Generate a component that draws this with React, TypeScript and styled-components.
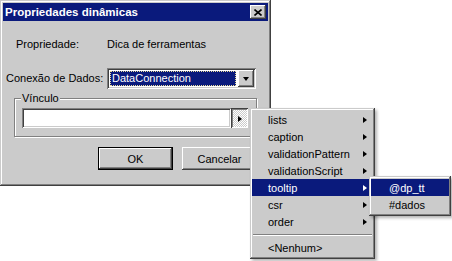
import React from 'react';
import styled, { createGlobalStyle } from 'styled-components';

const FACE = '#cbcbcb';
const NAVY = '#0a1a7c';
const SHADOW = '#808080';
const DARK = '#404040';

const GlobalStyle = createGlobalStyle`
  html, body {
    margin: 0;
    padding: 0;
    background: #fff;
  }
  body {
    font-family: "Liberation Sans", Arial, sans-serif;
    font-size: 11px;
    color: #000;
  }
`;

const raised = `
  box-shadow: inset -1px -1px ${DARK}, inset 1px 1px #fff,
    inset -2px -2px ${SHADOW}, inset 2px 2px ${FACE};
`;

const Stage = styled.div`
  position: relative;
  width: 452px;
  height: 261px;
  overflow: hidden;
`;

const Window = styled.div`
  width: 271px;
  height: 186px;
  box-sizing: border-box;
  padding: 3px;
  background: ${FACE};
  box-shadow: inset -1px -1px ${DARK}, inset 1px 1px ${FACE},
    inset -2px -2px ${SHADOW}, inset 2px 2px #fff;
  display: flex;
  flex-direction: column;
`;

const TitleBar = styled.div`
  height: 18px;
  background: ${NAVY};
  display: flex;
  align-items: center;
  justify-content: space-between;
  padding: 0 2px 0 2px;
`;

const Title = styled.span`
  color: #fff;
  font-weight: bold;
  font-size: 11.5px;
`;

const CloseButton = styled.div`
  width: 16px;
  height: 14px;
  background: ${FACE};
  ${raised}
  display: flex;
  align-items: center;
  justify-content: center;
`;

const Row = styled.div<{ $indent: number; $gap: number }>`
  display: flex;
  align-items: center;
  margin-top: ${p => p.$gap}px;
  padding-left: ${p => p.$indent}px;
  line-height: 13px;
`;

const Label = styled.span<{ $width: number }>`
  width: ${p => p.$width}px;
  flex-shrink: 0;
`;

const Combo = styled.div`
  width: 149px;
  height: 21px;
  box-sizing: border-box;
  padding: 2px;
  background: #fff;
  box-shadow: inset 1px 1px ${SHADOW}, inset -1px -1px #fff,
    inset 2px 2px ${DARK}, inset -2px -2px ${FACE};
  display: flex;
  gap: 1px;
`;

const ComboValue = styled.div`
  flex: 1;
  margin: 1px;
  padding-left: 1px;
  background: ${NAVY};
  color: #fff;
  border: 1px dotted #e8dc9a;
  display: flex;
  align-items: center;
`;

const ComboButton = styled.div`
  width: 16px;
  background: ${FACE};
  ${raised}
  display: flex;
  align-items: center;
  justify-content: center;
`;

const DownArrow = styled.span`
  width: 0;
  height: 0;
  border-left: 3.5px solid transparent;
  border-right: 3.5px solid transparent;
  border-top: 4px solid #000;
`;

const RightArrow = styled.span`
  width: 0;
  height: 0;
  border-top: 3.5px solid transparent;
  border-bottom: 3.5px solid transparent;
  border-left: 4px solid #000;
`;

const Group = styled.div`
  position: relative;
  margin: 9px 0 0 11px;
  width: 243px;
  height: 39px;
  box-sizing: border-box;
  border: 1px solid ${SHADOW};
  box-shadow: inset 1px 1px #fff, 1px 1px #fff;
  padding: 9px 0 0 7px;
`;

const Caption = styled.span`
  position: absolute;
  top: -8px;
  left: 6px;
  padding: 0 1px;
  background: ${FACE};
  line-height: 14px;
`;

const InputRow = styled.div`
  display: flex;
`;

const TextBox = styled.div`
  width: 209px;
  height: 20px;
  background: #fff;
  box-shadow: inset 1px 1px ${SHADOW}, inset -1px -1px #fff,
    inset 2px 2px ${DARK}, inset -2px -2px ${FACE};
`;

const PickButton = styled.div`
  width: 17px;
  height: 20px;
  background: repeating-conic-gradient(#fff 0 25%, ${FACE} 0 50%) 0 0 / 2px 2px;
  box-shadow: inset 1px 1px ${DARK}, inset -1px -1px #fff,
    inset 2px 2px ${SHADOW};
  display: flex;
  align-items: center;
  justify-content: center;
  padding: 1px 0 0 1px;
  box-sizing: border-box;
`;

const ButtonRow = styled.div`
  display: flex;
  gap: 9px;
  margin-top: 10px;
  padding-left: 95px;
`;

const Button = styled.div<{ $default?: boolean }>`
  width: 75px;
  height: 23px;
  box-sizing: border-box;
  background: ${FACE};
  display: flex;
  align-items: center;
  justify-content: center;
  box-shadow: ${p =>
    p.$default
      ? `inset 0 0 0 1px #000, inset -2px -2px ${DARK}, inset 2px 2px #fff, inset -3px -3px ${SHADOW}`
      : `inset -1px -1px ${DARK}, inset 1px 1px #fff, inset -2px -2px ${SHADOW}`};
`;

const Menu = styled.div<{ $left: number; $top: number; $width: number }>`
  position: absolute;
  left: ${p => p.$left}px;
  top: ${p => p.$top}px;
  width: ${p => p.$width}px;
  box-sizing: border-box;
  padding: 3px 2px;
  background: ${FACE};
  box-shadow: inset -1px -1px ${DARK}, inset 1px 1px ${FACE},
    inset -2px -2px ${SHADOW}, inset 2px 2px #fff,
    2px 2px 3px rgba(0, 0, 0, 0.3);
`;

const MenuItem = styled.div<{ $active?: boolean; $indent: number }>`
  height: 17px;
  display: flex;
  align-items: center;
  justify-content: space-between;
  padding: 0 6px 0 ${p => p.$indent}px;
  background: ${p => (p.$active ? NAVY : 'transparent')};
  color: ${p => (p.$active ? '#fff' : '#000')};

  & > span:last-child {
    border-left-color: ${p => (p.$active ? '#fff' : '#000')};
  }
`;

const Separator = styled.div`
  height: 9px;
  display: flex;
  align-items: center;
  padding: 0 1px;

  &::before {
    content: '';
    flex: 1;
    height: 1px;
    background: ${SHADOW};
    border-bottom: 1px solid #fff;
  }
`;

const items = [
  'lists',
  'caption',
  'validationPattern',
  'validationScript',
  'tooltip',
  'csr',
  'order',
];

export default function App() {
  return (
    <Stage>
      <GlobalStyle />
      <Window>
        <TitleBar>
          <Title>Propriedades dinâmicas</Title>
          <CloseButton>
            <svg width="8" height="7" viewBox="0 0 8 7">
              <path d="M0.5 0.5 L7.5 6.5 M7.5 0.5 L0.5 6.5" stroke="#000" strokeWidth="1.6" />
            </svg>
          </CloseButton>
        </TitleBar>

        <Row $indent={13} $gap={17}>
          <Label $width={91}>Propriedade:</Label>
          <span>Dica de ferramentas</span>
        </Row>

        <Row $indent={3} $gap={17}>
          <Label $width={101}>Conexão de Dados:</Label>
          <Combo>
            <ComboValue>DataConnection</ComboValue>
            <ComboButton>
              <DownArrow />
            </ComboButton>
          </Combo>
        </Row>

        <Group>
          <Caption>Vínculo</Caption>
          <InputRow>
            <TextBox />
            <PickButton>
              <RightArrow />
            </PickButton>
          </InputRow>
        </Group>

        <ButtonRow>
          <Button $default>OK</Button>
          <Button>Cancelar</Button>
        </ButtonRow>
      </Window>

      <Menu $left={250} $top={108} $width={125}>
        {items.map(name => (
          <MenuItem key={name} $indent={16} $active={name === 'tooltip'}>
            <span>{name}</span>
            <RightArrow />
          </MenuItem>
        ))}
        <Separator />
        <MenuItem $indent={16}>
          <span>&lt;Nenhum&gt;</span>
        </MenuItem>
      </Menu>

      <Menu $left={369} $top={176} $width={82}>
        <MenuItem $indent={18} $active>
          <span>@dp_tt</span>
        </MenuItem>
        <MenuItem $indent={18}>
          <span>#dados</span>
        </MenuItem>
      </Menu>
    </Stage>
  );
}
